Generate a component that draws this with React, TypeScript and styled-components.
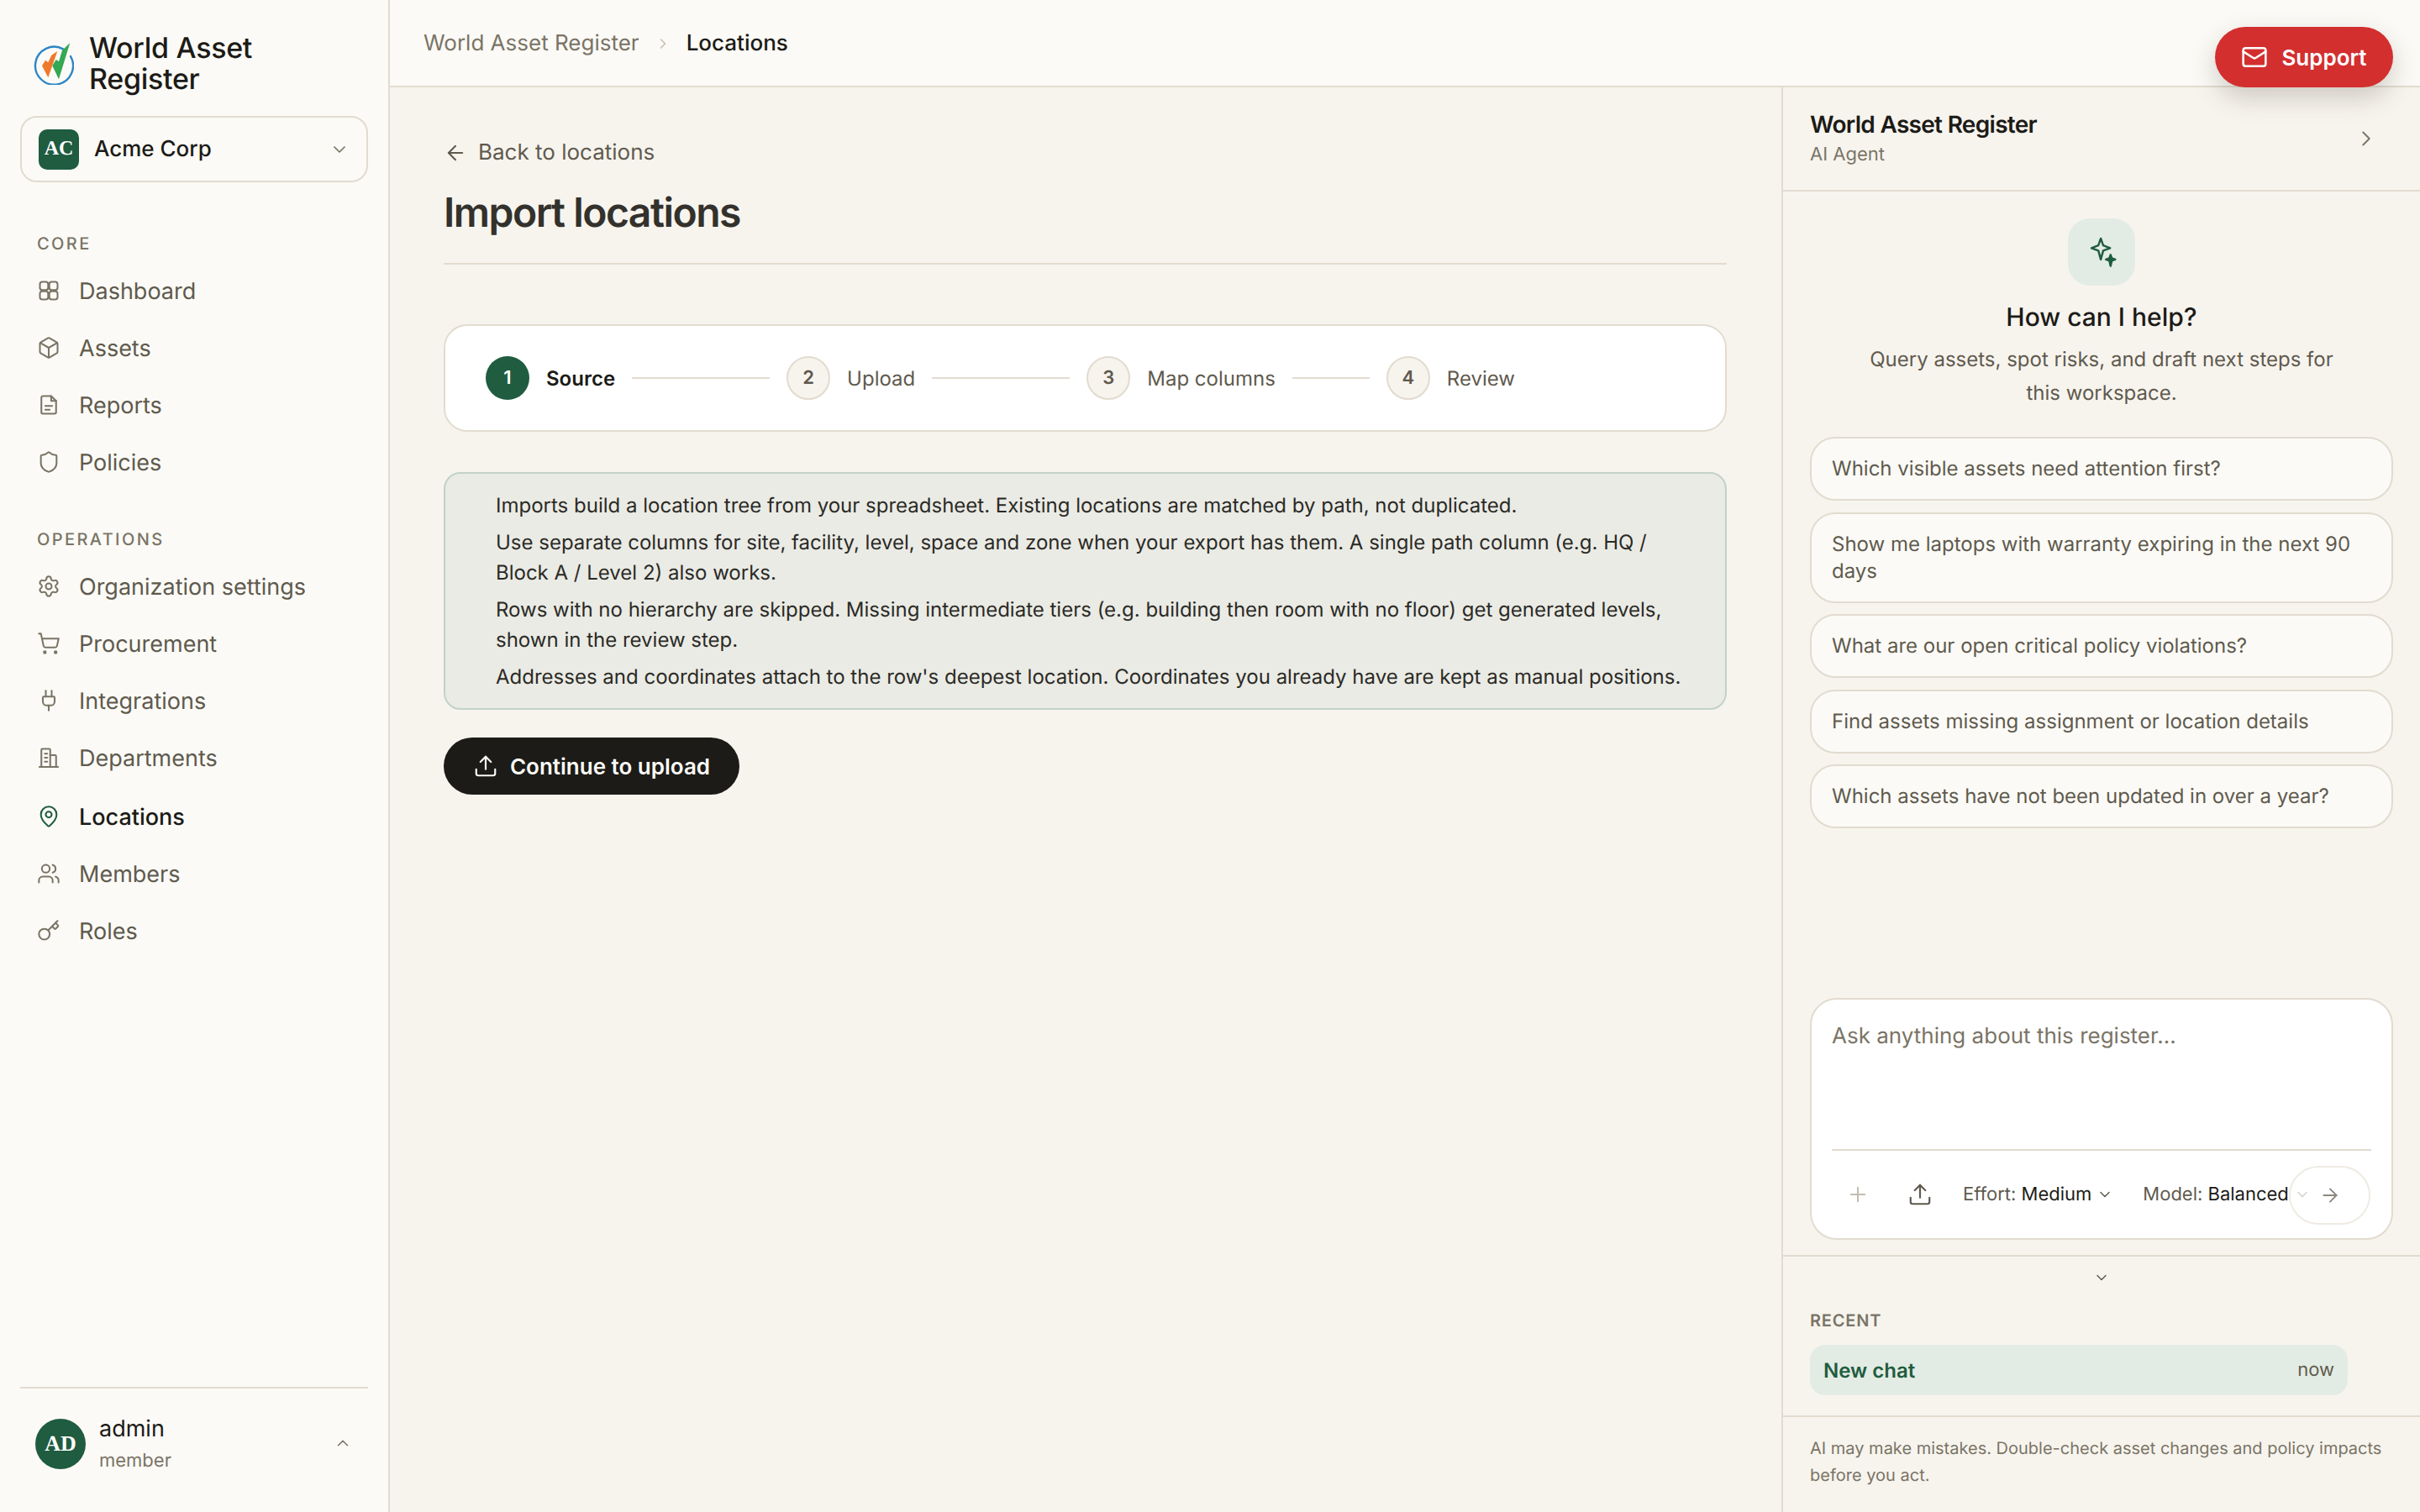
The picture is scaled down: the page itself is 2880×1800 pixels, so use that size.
import React from "react";
import styled, { createGlobalStyle } from "styled-components";
import {
	ArrowLeft,
	ArrowRight,
	Box,
	ChevronDown,
	ChevronRight,
	ChevronUp,
	Key,
	Mail,
	MapPin,
	Plug,
	Plus,
	Settings,
	Shield,
	ShoppingCart,
	Upload,
	Users,
} from "lucide-react";

// ===================== COLOURS =====================
const ink = "#1c1b17";
const body = "#5f5a4e";
const muted = "#7a7466";
const line = "#e2dbcf";
const green = "#1f5c40";
const mint = "#e3ece4";
const paper = "#fbfaf6";
const canvas = "#f7f4ee";

const GlobalStyle = createGlobalStyle`
  html, body {
    margin: 0;
    padding: 0;
    background: ${canvas};
  }
  * { box-sizing: border-box; }
  body {
    font-family: Inter, "Noto Sans", sans-serif;
    text-rendering: geometricPrecision;
    color: ${ink};
  }
`;

// ===================== SHELL =====================
const Shell = styled.div`
  position: relative;
  display: flex;
  width: 2880px;
  height: 1800px;
  overflow: hidden;
`;

const Column = styled.div`
  flex: 1;
  display: flex;
  flex-direction: column;
  min-width: 0;
`;

const Content = styled.div`
  flex: 1;
  display: flex;
  min-height: 0;
`;

// ===================== SIDEBAR =====================
const Sidebar = styled.aside`
  width: 464px;
  flex-shrink: 0;
  display: flex;
  flex-direction: column;
  background: ${paper};
  border-right: 2px solid ${line};
`;

const Brand = styled.div`
  display: flex;
  align-items: center;
  gap: 18px;
  padding: 39px 40px 0;
`;

const BrandName = styled.div`
  font-size: 34px;
  line-height: 37px;
  font-weight: 500;
  letter-spacing: -0.3px;
  color: ${ink};
`;

const OrgSwitch = styled.div`
  display: flex;
  align-items: center;
  height: 79px;
  margin: 25px 24px 0;
  padding: 0 20px;
  border: 2px solid ${line};
  border-radius: 20px;
  gap: 18px;
  color: ${muted};
`;

const OrgBadge = styled.div`
  width: 48px;
  height: 48px;
  border-radius: 10px;
  display: flex;
  align-items: center;
  justify-content: center;
  background: ${green};
  color: #fff;
  font-family: "Liberation Serif", serif;
  font-weight: 700;
  font-size: 24px;
`;

const OrgName = styled.div`
  flex: 1;
  font-size: 26px;
  font-weight: 500;
  color: ${ink};
`;

const Nav = styled.nav`
  display: flex;
  flex-direction: column;
  padding-left: 44px;
`;

const NavLabel = styled.div<{ $top: number }>`
  margin-top: ${({ $top }) => $top}px;
  margin-bottom: 8px;
  font-size: 20px;
  line-height: 28px;
  font-weight: 500;
  letter-spacing: 2.4px;
  color: ${muted};
`;

const NavItem = styled.a<{ $active?: boolean }>`
  display: flex;
  align-items: center;
  height: 68px;
  gap: 22px;
  font-size: 27px;
  font-weight: ${({ $active }) => ($active ? 500 : 400)};
  margin-top: ${({ $active }) => ($active ? 2 : 0)}px;
  color: ${({ $active }) => ($active ? ink : body)};

  svg {
    flex-shrink: 0;
    color: ${({ $active }) => ($active ? green : muted)};
  }
`;

const UserRow = styled.div`
  margin: auto 24px 0;
  padding: 36px 18px 0;
  height: 149px;
  border-top: 2px solid ${line};
  display: flex;
  align-items: flex-start;
  gap: 16px;
`;

const Avatar = styled.div`
  width: 60px;
  height: 60px;
  border-radius: 50%;
  display: flex;
  align-items: center;
  justify-content: center;
  background: ${green};
  color: #fff;
  font-family: "Liberation Serif", serif;
  font-weight: 700;
  font-size: 26px;
`;

const UserText = styled.div`
  flex: 1;
  display: flex;
  flex-direction: column;
`;

const UserName = styled.div`
  font-size: 27px;
  line-height: 34px;
  margin-top: -5px;
`;

const UserRole = styled.div`
  font-size: 22px;
  line-height: 32px;
  margin-top: 5px;
  color: ${muted};
`;

const UserChevron = styled.div`
  margin-top: 18px;
  margin-right: 1px;
  display: flex;
  color: ${muted};
`;

// ===================== TOP BAR =====================
const Topbar = styled.header`
  height: 104px;
  flex-shrink: 0;
  display: flex;
  align-items: flex-start;
  padding: 35px 40px 0;
  gap: 18px;
  background: ${paper};
  border-bottom: 2px solid ${line};
  font-size: 26px;
  line-height: 34px;
`;

const Crumb = styled.span<{ $current?: boolean }>`
  color: ${({ $current }) => ($current ? ink : muted)};
  font-weight: ${({ $current }) => ($current ? 500 : 400)};
`;

const CrumbSep = styled.span`
  display: flex;
  align-items: center;
  height: 34px;
  color: #c4bdaf;
`;

const SupportButton = styled.button`
  position: absolute;
  top: 32px;
  right: 32px;
  width: 212px;
  height: 72px;
  display: flex;
  align-items: center;
  justify-content: center;
  gap: 16px;
  border: none;
  border-radius: 36px;
  background: #d32f2f;
  color: #fff;
  font-family: inherit;
  font-size: 26px;
  font-weight: 600;
  box-shadow: 0 12px 30px rgba(60, 50, 30, 0.22);
`;

// ===================== IMPORT PAGE =====================
const Main = styled.main`
  flex: 1;
  min-width: 0;
  padding: 60px 65px 0 64px;
`;

const BackLink = styled.a`
  display: flex;
  align-items: center;
  gap: 13px;
  font-size: 26px;
  line-height: 36px;
  color: ${body};
`;

const PageHead = styled.div`
  margin-top: 25px;
  padding-bottom: 32px;
  border-bottom: 2px solid ${line};
`;

const Title = styled.h1`
  margin: 0;
  font-size: 48px;
  line-height: 56px;
  font-weight: 600;
  letter-spacing: -1.5px;
  color: #33312c;
`;

const Stepper = styled.div`
  margin-top: 71px;
  display: flex;
  align-items: center;
  gap: 20px;
  height: 128px;
  padding: 0 48px;
  background: #fff;
  border: 2px solid ${line};
  border-radius: 28px;
`;

const StepDot = styled.div<{ $active?: boolean }>`
  width: 52px;
  height: 52px;
  flex-shrink: 0;
  border-radius: 50%;
  display: flex;
  align-items: center;
  justify-content: center;
  font-size: 22px;
  font-weight: 600;
  background: ${({ $active }) => ($active ? green : canvas)};
  color: ${({ $active }) => ($active ? "#fff" : body)};
  border: ${({ $active }) => ($active ? "none" : `2px solid ${line}`)};
`;

const StepName = styled.span<{ $active?: boolean }>`
  font-size: 24px;
  font-weight: ${({ $active }) => ($active ? 600 : 400)};
  color: ${({ $active }) => ($active ? ink : body)};
`;

const StepLine = styled.div<{ $width: number }>`
  width: ${({ $width }) => $width}px;
  height: 2px;
  background: ${line};
`;

const Notice = styled.div`
  margin-top: 48px;
  display: flex;
  flex-direction: column;
  gap: 8px;
  padding: 20px 40px 19px 60px;
  background: #eaebe5;
  border: 2px solid #c2d2c6;
  border-radius: 20px;
  font-size: 24px;
  line-height: 36px;
  color: #2b2a25;
`;

const NoticeLine = styled.p`
  margin: 0;
`;

const PrimaryButton = styled.button`
  margin-top: 33px;
  height: 68px;
  width: 352px;
  display: flex;
  align-items: center;
  justify-content: center;
  gap: 14px;
  border: none;
  border-radius: 34px;
  background: ${ink};
  color: #fbfaf6;
  font-family: inherit;
  font-size: 26px;
  font-weight: 600;
`;

// ===================== AGENT PANEL =====================
const Panel = styled.aside`
  width: 760px;
  flex-shrink: 0;
  display: flex;
  flex-direction: column;
  border-left: 2px solid ${line};
`;

const PanelHead = styled.div`
  height: 124px;
  flex-shrink: 0;
  display: flex;
  align-items: center;
  justify-content: space-between;
  padding: 0 49px 0 32px;
  border-bottom: 2px solid ${line};
  color: ${muted};
`;

const PanelTitle = styled.div`
  font-size: 28px;
  line-height: 36px;
  font-weight: 600;
  letter-spacing: -0.7px;
  color: ${ink};
`;

const PanelSub = styled.div`
  font-size: 22px;
  line-height: 32px;
  margin-top: 2px;
  color: ${muted};
`;

const Welcome = styled.div`
  flex: 1;
  display: flex;
  flex-direction: column;
  align-items: center;
  padding: 32px 32px 0;
`;

const SparkTile = styled.div`
  width: 80px;
  height: 80px;
  border-radius: 26px;
  display: flex;
  align-items: center;
  justify-content: center;
  background: ${mint};
  color: ${green};
`;

const WelcomeTitle = styled.h2`
  margin: 18px 0 0;
  font-size: 30px;
  line-height: 40px;
  font-weight: 500;
  color: ${ink};
`;

const WelcomeText = styled.p`
  margin: 10px 0 0;
  width: 580px;
  text-align: center;
  font-size: 24px;
  line-height: 40px;
  color: ${body};
`;

const Suggestions = styled.div`
  align-self: stretch;
  display: flex;
  flex-direction: column;
  gap: 13.5px;
  margin-top: 32px;
`;

const Suggestion = styled.div`
  padding: 20px 24px;
  background: ${paper};
  border: 2px solid ${line};
  border-radius: 30px;
  font-size: 24px;
  line-height: 32px;
  color: ${body};
`;

const ComposerWrap = styled.div`
  padding: 0 32px 18px;
  border-bottom: 2px solid ${line};
`;

const Composer = styled.div`
  position: relative;
  height: 288px;
  display: flex;
  flex-direction: column;
  padding: 0 24px;
  background: #fff;
  border: 2px solid ${line};
  border-radius: 32px;
`;

const Placeholder = styled.div`
  flex: 1;
  padding-top: 26px;
  font-size: 26px;
  line-height: 36px;
  color: ${muted};
  border-bottom: 2px solid ${line};
`;

const Toolbar = styled.div`
  height: 104px;
  flex-shrink: 0;
  display: flex;
  align-items: center;
  font-size: 22px;
  color: ${body};
`;

const ToolIcon = styled.span<{ $faded?: boolean; $width: number }>`
  display: flex;
  align-items: center;
  justify-content: center;
  width: ${({ $width }) => $width}px;
  color: ${({ $faded }) => ($faded ? "#c2bdb2" : body)};
`;

const Picker = styled.span`
  display: flex;
  align-items: center;
  gap: 6px;
  margin-left: 7px;
  margin-right: 28px;
  white-space: nowrap;

  b {
    font-weight: 400;
    color: ${ink};
  }
`;

const SendButton = styled.button`
  position: absolute;
  right: 25px;
  top: 198px;
  width: 97px;
  height: 70px;
  display: flex;
  align-items: center;
  justify-content: center;
  padding: 0;
  background: rgba(255, 255, 255, 0.72);
  border: 2px solid #efebe4;
  border-radius: 35px;
  color: #8d887d;
`;

const Collapse = styled.div`
  display: flex;
  justify-content: center;
  padding-top: 15px;
  color: ${body};
`;

const Recent = styled.div`
  padding: 27px 32px 24px;
  border-bottom: 2px solid ${line};
`;

const RecentLabel = styled.div`
  font-size: 20px;
  line-height: 28px;
  font-weight: 600;
  letter-spacing: 0.8px;
  color: ${muted};
`;

const RecentRow = styled.div`
  margin-top: 15px;
  width: 640px;
  height: 60px;
  display: flex;
  align-items: center;
  justify-content: space-between;
  padding: 0 16px;
  background: ${mint};
  border-radius: 18px;
`;

const RecentName = styled.span`
  font-size: 24px;
  font-weight: 600;
  color: ${green};
`;

const RecentTime = styled.span`
  font-size: 22px;
  color: ${body};
`;

const Disclaimer = styled.p`
  margin: 0;
  padding: 21px 32px 28px;
  font-size: 20px;
  line-height: 32px;
  color: ${muted};
`;

// ===================== ICONS =====================
const Logo = () => (
	<svg width="48" height="50" viewBox="0 0 48 50" fill="none" style={{ flexShrink: 0 }}>
		<path
			d="M35.5 7.6A22.5 22.5 0 1 0 44 16"
			stroke="#2d86c6"
			strokeWidth="2.4"
			strokeLinecap="round"
		/>
		<path
			d="M10 27.3 14 20.7 17.3 23.3 21.3 14.7 28.3 10 17.3 41.3Z"
			fill="#ee7a2b"
		/>
		<path
			d="M22.3 27.3 26.7 20 30 22.3 34 9 43.3 0 30 43.3Z"
			fill="#34a853"
		/>
	</svg>
);

const DashboardIcon = () => (
	<svg width="28" height="28" viewBox="0 0 24 24" fill="none" stroke="currentColor" strokeWidth="1.75">
		<rect x="3" y="3" width="8.4" height="8.4" rx="2.4" />
		<rect x="12.6" y="3" width="8.4" height="8.4" rx="2.4" />
		<rect x="3" y="12.6" width="8.4" height="8.4" rx="2.4" />
		<rect x="12.6" y="12.6" width="8.4" height="8.4" rx="2.4" />
	</svg>
);

const ReportIcon = () => (
	<svg width="28" height="28" viewBox="0 0 24 24" fill="none" stroke="currentColor" strokeWidth="1.75" strokeLinecap="round" strokeLinejoin="round">
		<path d="M14.5 3H6a1.5 1.5 0 0 0-1.5 1.5v15A1.5 1.5 0 0 0 6 21h12a1.5 1.5 0 0 0 1.5-1.5V8Z" />
		<path d="M14.5 3v5h5" />
		<path d="M8.5 13h7" />
		<path d="M8.5 17h4.5" />
	</svg>
);

const BuildingIcon = () => (
	<svg width="28" height="28" viewBox="0 0 24 24" fill="none" stroke="currentColor" strokeWidth="1.75" strokeLinecap="round" strokeLinejoin="round">
		<path d="M2.5 21.5h19" />
		<path d="M4.5 21.5V4a1 1 0 0 1 1-1h7a1 1 0 0 1 1 1v17.5" />
		<path d="M13.5 9.5h5a1 1 0 0 1 1 1v11" />
		<path d="M8 8h2.5M8 12h2.5M8 16h2.5" />
	</svg>
);

const SparkIcon = () => (
	<svg width="40" height="40" viewBox="-4.2 0 36 36" fill="none" stroke="currentColor" strokeWidth="2.2" strokeLinejoin="round">
		<path d="M13 3.5 15.6 11 23 13.8 15.6 16.6 13 26 10.4 16.6 3 13.8 10.4 11Z" />
		<path d="M23.5 21 24.8 24.6 28.5 26 24.8 27.4 23.5 33 22.2 27.4 18.5 26 22.2 24.6Z" fill="currentColor" />
	</svg>
);

// ===================== COMPONENT =====================
const core = [
	{ label: "Dashboard", icon: <DashboardIcon /> },
	{ label: "Assets", icon: <Box size={28} strokeWidth={1.75} /> },
	{ label: "Reports", icon: <ReportIcon /> },
	{ label: "Policies", icon: <Shield size={28} strokeWidth={1.75} /> },
];

const operations = [
	{ label: "Organization settings", icon: <Settings size={28} strokeWidth={1.75} /> },
	{ label: "Procurement", icon: <ShoppingCart size={28} strokeWidth={1.75} /> },
	{ label: "Integrations", icon: <Plug size={28} strokeWidth={1.75} /> },
	{ label: "Departments", icon: <BuildingIcon /> },
	{ label: "Locations", icon: <MapPin size={28} strokeWidth={1.75} />, active: true },
	{ label: "Members", icon: <Users size={28} strokeWidth={1.75} /> },
	{ label: "Roles", icon: <Key size={28} strokeWidth={1.75} /> },
];

const notes = [
	"Imports build a location tree from your spreadsheet. Existing locations are matched by path, not duplicated.",
	"Use separate columns for site, facility, level, space and zone when your export has them. A single path column (e.g. HQ / Block A / Level 2) also works.",
	"Rows with no hierarchy are skipped. Missing intermediate tiers (e.g. building then room with no floor) get generated levels, shown in the review step.",
	"Addresses and coordinates attach to the row's deepest location. Coordinates you already have are kept as manual positions.",
];

const prompts = [
	"Which visible assets need attention first?",
	"Show me laptops with warranty expiring in the next 90 days",
	"What are our open critical policy violations?",
	"Find assets missing assignment or location details",
	"Which assets have not been updated in over a year?",
];

const App: React.FC = () => {
	return (
		<Shell>
			<GlobalStyle />
			<Sidebar>
				<Brand>
					<Logo />
					<BrandName>
						World Asset
						<br />
						Register
					</BrandName>
				</Brand>
				<OrgSwitch>
					<OrgBadge>AC</OrgBadge>
					<OrgName>Acme Corp</OrgName>
					<ChevronDown size={24} strokeWidth={1.75} />
				</OrgSwitch>
				<Nav>
					<NavLabel $top={59}>CORE</NavLabel>
					{core.map((item) => (
						<NavItem key={item.label}>
							{item.icon}
							{item.label}
						</NavItem>
					))}
					<NavLabel $top={44}>OPERATIONS</NavLabel>
					{operations.map((item) => (
						<NavItem key={item.label} $active={item.active}>
							{item.icon}
							{item.label}
						</NavItem>
					))}
				</Nav>
				<UserRow>
					<Avatar>AD</Avatar>
					<UserText>
						<UserName>admin</UserName>
						<UserRole>member</UserRole>
					</UserText>
					<UserChevron>
						<ChevronUp size={22} strokeWidth={1.75} />
					</UserChevron>
				</UserRow>
			</Sidebar>

			<Column>
				<Topbar>
					<Crumb>World Asset Register</Crumb>
					<CrumbSep>
						<ChevronRight size={20} strokeWidth={1.75} />
					</CrumbSep>
					<Crumb $current>Locations</Crumb>
				</Topbar>
				<Content>
					<Main>
						<BackLink>
							<ArrowLeft size={28} strokeWidth={1.75} />
							Back to locations
						</BackLink>
						<PageHead>
							<Title>Import locations</Title>
						</PageHead>
						<Stepper>
							<StepDot $active>1</StepDot>
							<StepName $active>Source</StepName>
							<StepLine $width={164} />
							<StepDot>2</StepDot>
							<StepName>Upload</StepName>
							<StepLine $width={164} />
							<StepDot>3</StepDot>
							<StepName>Map columns</StepName>
							<StepLine $width={92} />
							<StepDot>4</StepDot>
							<StepName>Review</StepName>
						</Stepper>
						<Notice>
							{notes.map((note) => (
								<NoticeLine key={note}>{note}</NoticeLine>
							))}
						</Notice>
						<PrimaryButton>
							<Upload size={30} strokeWidth={1.75} />
							Continue to upload
						</PrimaryButton>
					</Main>

					<Panel>
						<PanelHead>
							<div>
								<PanelTitle>World Asset Register</PanelTitle>
								<PanelSub>AI Agent</PanelSub>
							</div>
							<ChevronRight size={30} strokeWidth={1.5} />
						</PanelHead>
						<Welcome>
							<SparkTile>
								<SparkIcon />
							</SparkTile>
							<WelcomeTitle>How can I help?</WelcomeTitle>
							<WelcomeText>
								Query assets, spot risks, and draft next steps for this
								workspace.
							</WelcomeText>
							<Suggestions>
								{prompts.map((prompt) => (
									<Suggestion key={prompt}>{prompt}</Suggestion>
								))}
							</Suggestions>
						</Welcome>
						<ComposerWrap>
							<Composer>
								<Placeholder>Ask anything about this register...</Placeholder>
								<Toolbar>
									<ToolIcon $faded $width={61}>
										<Plus size={28} strokeWidth={1.75} />
									</ToolIcon>
									<ToolIcon $width={88}>
										<Upload size={30} strokeWidth={1.75} />
									</ToolIcon>
									<Picker>
										<span>
											Effort: <b>Medium</b>
										</span>
										<ChevronDown size={20} strokeWidth={1.75} />
									</Picker>
									<Picker>
										<span>
											Model: <b>Balanced</b>
										</span>
										<ChevronDown size={20} strokeWidth={1.75} />
									</Picker>
								</Toolbar>
								<SendButton>
									<ArrowRight size={26} strokeWidth={1.75} />
								</SendButton>
							</Composer>
						</ComposerWrap>
						<Collapse>
							<ChevronDown size={20} strokeWidth={1.75} />
						</Collapse>
						<Recent>
							<RecentLabel>RECENT</RecentLabel>
							<RecentRow>
								<RecentName>New chat</RecentName>
								<RecentTime>now</RecentTime>
							</RecentRow>
						</Recent>
						<Disclaimer>
							AI may make mistakes. Double-check asset changes and policy
							impacts before you act.
						</Disclaimer>
					</Panel>
				</Content>
			</Column>

			<SupportButton>
				<Mail size={32} strokeWidth={1.9} />
				Support
			</SupportButton>
		</Shell>
	);
};

export default App;
